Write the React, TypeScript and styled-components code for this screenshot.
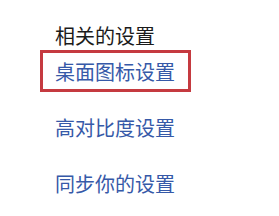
import styled, { createGlobalStyle } from 'styled-components';

const GlobalStyle = createGlobalStyle`
  body {
    margin: 0;
    background: #ffffff;
    font-family: 'Noto Sans CJK SC', 'Microsoft YaHei', sans-serif;
  }
`;

const links = [
  { label: '桌面图标设置', active: true },
  { label: '高对比度设置', active: false },
  { label: '同步你的设置', active: false },
];

const App = () => {
  return (
    <>
      <GlobalStyle />
      <Panel>
        <Heading>相关的设置</Heading>
        <LinkList>
          {links.map((link) => (
            <LinkItem key={link.label} $active={link.active}>
              {link.label}
            </LinkItem>
          ))}
        </LinkList>
      </Panel>
    </>
  );
};

const Panel = styled.div`
  display: flex;
  flex-direction: column;
  padding: 24px 0 0 40px;
`;

const Heading = styled.div`
  font-size: 20px;
  line-height: 24px;
  color: #1b1b1b;
  padding-left: 15px;
  margin-bottom: 2px;
`;

const LinkList = styled.div`
  display: flex;
  flex-direction: column;
  gap: 14px;
`;

const LinkItem = styled.a<{ $active: boolean }>`
  box-sizing: border-box;
  width: 151px;
  height: 42px;
  padding: 1px 0 0 12px;
  border: 3px solid ${({ $active }) => ($active ? '#c53a40' : 'transparent')};
  font-size: 20px;
  line-height: 35px;
  color: #3659a8;
  white-space: nowrap;
  cursor: pointer;
`;

export default App;
